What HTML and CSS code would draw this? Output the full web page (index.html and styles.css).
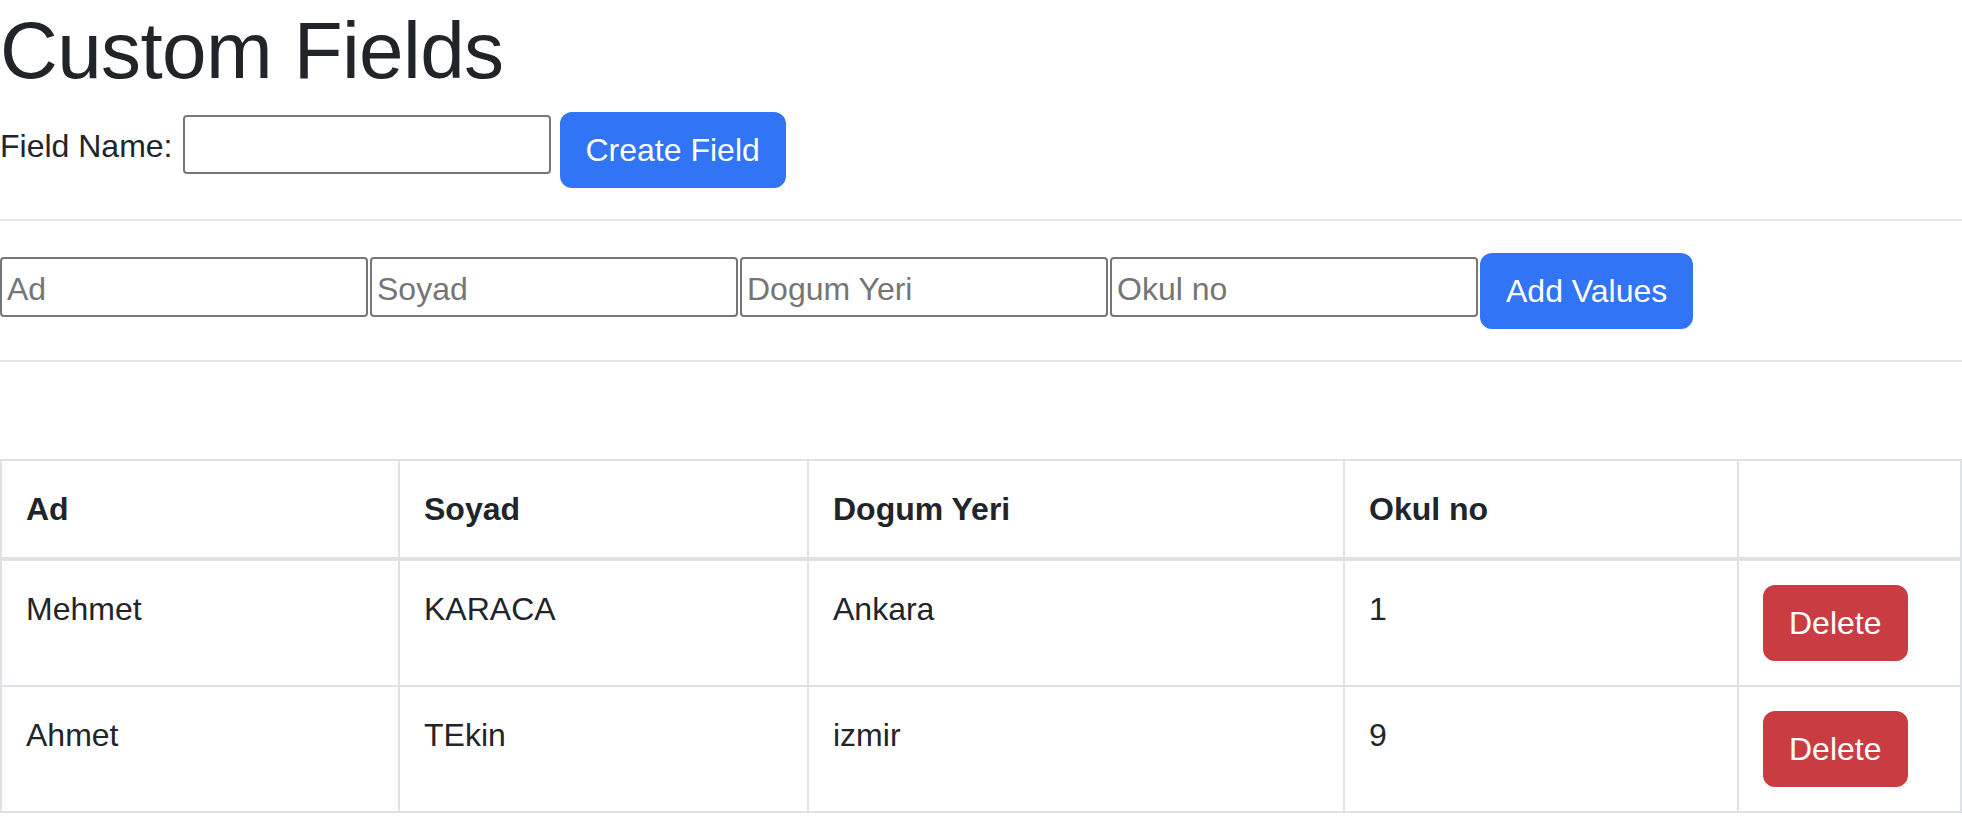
FILE: index.html
```html
<!DOCTYPE html>
<html lang="tr">
<head>
<meta charset="utf-8">
<title>Custom Fields</title>
<link rel="stylesheet" href="styles.css">
</head>
<body>
<h1 class="title">Custom Fields</h1>
<div class="field-row">
  <label class="field-label" for="fname">Field Name:</label>
  <input class="field-input" id="fname" type="text">
  <button class="btn btn-primary">Create Field</button>
</div>
<hr class="sep">
<div class="values-row">
  <input class="value-input" type="text" placeholder="Ad">
  <input class="value-input" type="text" placeholder="Soyad">
  <input class="value-input" type="text" placeholder="Dogum Yeri">
  <input class="value-input" type="text" placeholder="Okul no">
  <button class="btn btn-primary">Add Values</button>
</div>
<hr class="sep">
<table class="data-table">
  <colgroup>
    <col class="c1"><col class="c2"><col class="c3"><col class="c4"><col class="c5">
  </colgroup>
  <thead>
    <tr><th>Ad</th><th>Soyad</th><th>Dogum Yeri</th><th>Okul no</th><th></th></tr>
  </thead>
  <tbody>
    <tr><td>Mehmet</td><td>KARACA</td><td>Ankara</td><td>1</td><td><button class="btn btn-danger">Delete</button></td></tr>
    <tr><td>Ahmet</td><td>TEkin</td><td>izmir</td><td>9</td><td><button class="btn btn-danger">Delete</button></td></tr>
  </tbody>
</table>
</body>
</html>
```
FILE: styles.css
```css
* { box-sizing: border-box; }
html, body { margin: 0; padding: 0; background: #fff; }
body {
  font-family: "Liberation Sans", Arial, sans-serif;
  font-size: 32px;
  line-height: 1.5;
  color: #212529;
}
.title {
  margin: 3px 0 13px;
  font-size: 80px;
  font-weight: 400;
  line-height: 96px;
  letter-spacing: -0.6px;
}
.field-row {
  display: flex;
  align-items: flex-start;
}
.field-label {
  margin-top: 10px;
  margin-right: 10px;
}
.field-input {
  width: 368px;
  height: 59px;
  margin-top: 3px;
  margin-right: 9px;
  border: 2px solid #767676;
  border-radius: 4px;
  font: inherit;
  padding: 4px 6px 0;
}
.btn {
  font-family: inherit;
  font-size: 32px;
  line-height: 48px;
  padding: 12px 24px;
  border: 2px solid transparent;
  border-radius: 12px;
  color: #fff;
  cursor: pointer;
  white-space: nowrap;
}
.btn-primary { background: #3174f6; border-color: #3174f6; }
.btn-danger { background: #c93d42; border-color: #c93d42; }
.sep {
  margin: 31px 0 32px;
  border: 0;
  border-top: 2px solid #e6e6e6;
  height: 0;
}
.values-row {
  display: flex;
  align-items: flex-start;
  gap: 2px;
}
.value-input {
  width: 368px;
  height: 60px;
  margin-top: 4px;
  border: 2px solid #767676;
  border-radius: 4px;
  font: inherit;
  padding: 4px 5px 0;
  color: #212529;
}
.value-input::placeholder { color: #757575; }
.data-table {
  margin-top: 97px;
  width: 100%;
  border-collapse: collapse;
  table-layout: fixed;
  vertical-align: top;
}
.c1 { width: 398px; }
.c2 { width: 409px; }
.c3 { width: 536px; }
.c4 { width: 394px; }
.c5 { width: auto; }
.data-table th,
.data-table td {
  border: 2px solid #dee2e6;
  padding: 24px;
  text-align: left;
  vertical-align: top;
}
.data-table th { font-weight: 700; }
.data-table thead th { border-bottom-width: 4px; }
```
